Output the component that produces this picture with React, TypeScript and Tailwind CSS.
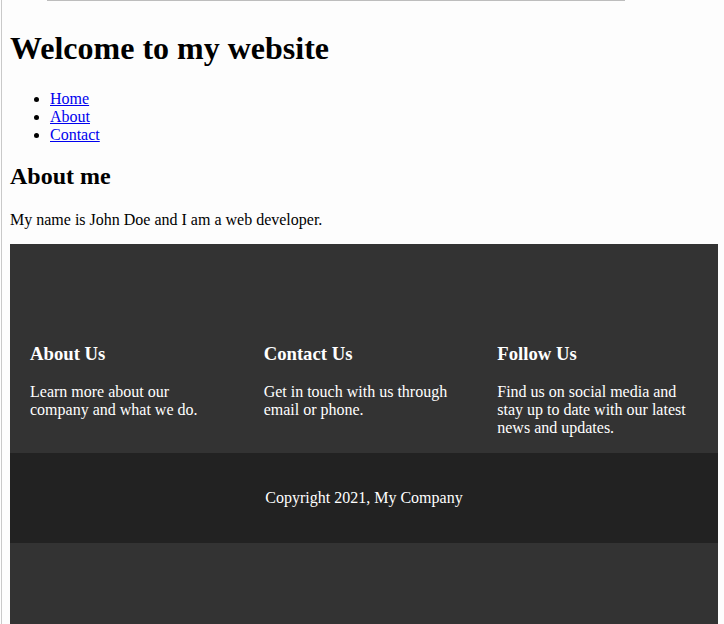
export default function App() {
  const columns = [
    { title: "About Us", text: "Learn more about our company and what we do." },
    { title: "Contact Us", text: "Get in touch with us through email or phone." },
    { title: "Follow Us", text: "Find us on social media and stay up to date with our latest news and updates." },
  ];

  return (
    <div className="min-h-screen bg-[#fdfdfd] pl-px font-['Liberation_Serif',serif] text-black">
      <div className="min-h-[624px] border-l border-[#c9c9c9] pl-[8px] pr-[6px] overflow-hidden">
        {/* top rule */}
        <div className="h-px w-[578px] ml-[37px] bg-[#bdbdbd]" />

        <h1 className="text-[32px] font-bold leading-[37px] mt-[29px] mb-[23px]">
          Welcome to my website
        </h1>

        <ul className="list-disc pl-[40px] text-base leading-[18px]">
          <li><a href="#" className="text-[#0000ee] underline">Home</a></li>
          <li><a href="#" className="text-[#0000ee] underline">About</a></li>
          <li><a href="#" className="text-[#0000ee] underline">Contact</a></li>
        </ul>

        <h2 className="text-2xl font-bold leading-[27.6px] mt-[19px] mb-[20px]">About me</h2>
        <p className="text-base leading-[18px] mb-[15px]">My name is John Doe and I am a web developer.</p>

        {/* footer */}
        <footer className="text-white">
          <div className="bg-[#333333] h-[209px] pt-[99px] flex">
            {columns.map((c) => (
              <div key={c.title} className="w-[33%] px-5">
                <h3 className="text-[18.72px] font-bold leading-[21.5px] mb-[18.72px]">{c.title}</h3>
                <p className="text-base leading-[18px]">{c.text}</p>
              </div>
            ))}
          </div>
          <div className="bg-[#222222] h-[90px] flex items-center justify-center text-base leading-[18px]">
            Copyright 2021, My Company
          </div>
          <div className="bg-[#333333] h-[140px]" />
        </footer>
      </div>
    </div>
  );
}
